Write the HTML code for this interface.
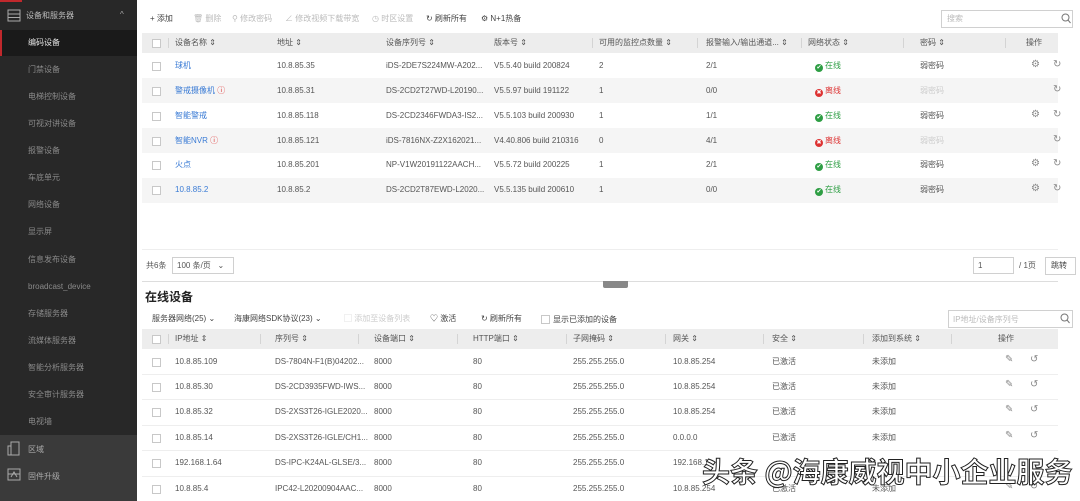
<!DOCTYPE html>
<html><head><meta charset="utf-8"><style>
*{margin:0;padding:0;box-sizing:border-box}
body{width:1080px;height:501px;overflow:hidden;background:#fff;font-family:"Liberation Sans","Noto Sans CJK SC",sans-serif;font-size:8px;line-height:10px;color:#555;position:relative}
.a{position:absolute;white-space:nowrap;line-height:10px}
#sb{position:absolute;left:0;top:0;width:137px;height:501px;background:#282828}
.si{position:absolute;left:28px;color:#8a8a8a;font-size:8px;line-height:10px}
.cb{position:absolute;width:9px;height:9px;border:1px solid #c8c8c8;background:#fff}
.hd{position:absolute;left:142px;width:916px;height:20px;background:#ededed}
.hdt{position:absolute;color:#555;font-size:8px;line-height:10px;white-space:nowrap}
.row{position:absolute;left:142px;width:916px}
.lnk{color:#3a7bd5}
.sep{position:absolute;width:1px;height:10px;background:#d4d4d4}
.dot{display:inline-block;width:8px;height:8px;border-radius:50%;color:#fff;font-size:6px;line-height:8px;text-align:center;vertical-align:-1px;margin-right:2px}
.wm{position:absolute;left:702px;top:453px;font-size:28px;line-height:36px;color:#fff;font-family:"Noto Sans CJK SC",sans-serif;-webkit-text-stroke:1px #222;font-weight:bold;white-space:nowrap}
</style></head><body>
<div id="sb">
<div style="position:absolute;left:0;top:0;width:22px;height:2px;background:#c0282c"></div>
<svg class="a" style="left:7px;top:9px" width="14" height="13"><rect x="1" y="1" width="12" height="11" fill="none" stroke="#aaa"/><line x1="1" y1="5" x2="13" y2="5" stroke="#aaa"/><line x1="1" y1="8.5" x2="13" y2="8.5" stroke="#aaa"/></svg>
<div class="a" style="left:26px;top:11px;color:#bbb">设备和服务器</div>
<div class="a" style="left:120px;top:10px;color:#aaa">^</div>
<div style="position:absolute;left:0;top:30px;width:137px;height:26px;background:#1a1a1a;border-left:2px solid #c0282c"></div>
<div class="a" style="left:28px;top:38px;color:#e6e6e6">编码设备</div>
<div class="si" style="top:65px">门禁设备</div>
<div class="si" style="top:92px">电梯控制设备</div>
<div class="si" style="top:119px">可视对讲设备</div>
<div class="si" style="top:146px">报警设备</div>
<div class="si" style="top:173px">车底单元</div>
<div class="si" style="top:200px">网络设备</div>
<div class="si" style="top:227px">显示屏</div>
<div class="si" style="top:255px">信息发布设备</div>
<div class="si" style="top:282px">broadcast_device</div>
<div class="si" style="top:309px">存储服务器</div>
<div class="si" style="top:336px">流媒体服务器</div>
<div class="si" style="top:363px">智能分析服务器</div>
<div class="si" style="top:390px">安全审计服务器</div>
<div class="si" style="top:417px">电视墙</div>
<div style="position:absolute;left:0;top:435px;width:137px;height:66px;background:#3a3a3a"></div>
<svg class="a" style="left:7px;top:441px" width="14" height="15"><rect x="4" y="1" width="8" height="13" fill="none" stroke="#aaa"/><rect x="1" y="5" width="3" height="9" fill="none" stroke="#aaa"/></svg>
<div class="a" style="left:28px;top:445px;color:#aaa">区域</div>
<svg class="a" style="left:7px;top:468px" width="14" height="13"><rect x="1" y="1" width="12" height="11" fill="none" stroke="#aaa"/><line x1="1" y1="6" x2="13" y2="6" stroke="#aaa"/><path d="M4 9 L7 4 L10 9" fill="none" stroke="#aaa"/></svg>
<div class="a" style="left:28px;top:472px;color:#aaa">固件升级</div>
</div>

<div class="a" style="left:150px;top:14px;color:#444">+ 添加</div>
<div class="a" style="left:193px;top:14px;color:#bbb">🗑 删除</div>
<div class="a" style="left:232px;top:14px;color:#bbb">⚲ 修改密码</div>
<div class="a" style="left:285px;top:14px;color:#bbb">∠ 修改视频下载带宽</div>
<div class="a" style="left:372px;top:14px;color:#bbb">◷ 时区设置</div>
<div class="a" style="left:426px;top:14px;color:#444">↻ 刷新所有</div>
<div class="a" style="left:481px;top:14px;color:#444">⚙ N+1热备</div>
<div style="position:absolute;left:941px;top:10px;width:132px;height:18px;border:1px solid #d0d0d0"></div>
<div class="a" style="left:947px;top:14px;color:#bbb">搜索</div>
<svg class="a" style="left:1061px;top:13px" width="10" height="11"><circle cx="4.5" cy="4.5" r="3.5" fill="none" stroke="#777"/><line x1="7" y1="7" x2="9.5" y2="10" stroke="#777"/></svg>

<div class="hd" style="top:33px"></div>
<div class="cb" style="left:152px;top:39px"></div>
<div class="sep" style="left:168px;top:38px"></div>
<div class="hdt" style="left:175px;top:38px">设备名称 ⇕</div>
<div class="hdt" style="left:277px;top:38px">地址 ⇕</div>
<div class="hdt" style="left:386px;top:38px">设备序列号 ⇕</div>
<div class="hdt" style="left:494px;top:38px">版本号 ⇕</div>
<div class="sep" style="left:592px;top:38px"></div><div class="hdt" style="left:599px;top:38px">可用的监控点数量 ⇕</div>
<div class="sep" style="left:697px;top:38px"></div><div class="hdt" style="left:706px;top:38px">报警输入/输出通道... ⇕</div>
<div class="sep" style="left:801px;top:38px"></div><div class="hdt" style="left:808px;top:38px">网络状态 ⇕</div>
<div class="sep" style="left:903px;top:38px"></div><div class="hdt" style="left:920px;top:38px">密码 ⇕</div>
<div class="sep" style="left:1005px;top:38px"></div><div class="hdt" style="left:1026px;top:38px">操作</div>

<div class="row" style="top:78px;height:25px;background:#f5f5f5"></div>
<div class="row" style="top:128px;height:25px;background:#f5f5f5"></div>
<div class="row" style="top:178px;height:25px;background:#f5f5f5"></div>

<div class="cb" style="left:152px;top:62px"></div><div class="a lnk" style="left:175px;top:61px">球机</div><div class="a" style="left:277px;top:61px">10.8.85.35</div><div class="a" style="left:386px;top:61px">iDS-2DE7S224MW-A202...</div><div class="a" style="left:494px;top:61px">V5.5.40 build 200824</div><div class="a" style="left:599px;top:61px">2</div><div class="a" style="left:706px;top:61px">2/1</div><div class="a" style="left:815px;top:61px;color:#2e9e44"><span class="dot" style="background:#2e9e44">✔</span>在线</div><div class="a" style="left:920px;top:61px">弱密码</div><div class="a" style="left:1031px;top:60px;color:#888;font-size:10px">⚙</div><div class="a" style="left:1053px;top:60px;color:#888;font-size:10px">↻</div>

<div class="cb" style="left:152px;top:87px"></div><div class="a lnk" style="left:175px;top:86px">警戒摄像机 <span style="color:#d33">ⓘ</span></div><div class="a" style="left:277px;top:86px">10.8.85.31</div><div class="a" style="left:386px;top:86px">DS-2CD2T27WD-L20190...</div><div class="a" style="left:494px;top:86px">V5.5.97 build 191122</div><div class="a" style="left:599px;top:86px">1</div><div class="a" style="left:706px;top:86px">0/0</div><div class="a" style="left:815px;top:86px;color:#d33"><span class="dot" style="background:#d33">✖</span>离线</div><div class="a" style="left:920px;top:86px;color:#ccc">弱密码</div><div class="a" style="left:1053px;top:85px;color:#888;font-size:10px">↻</div>

<div class="cb" style="left:152px;top:112px"></div><div class="a lnk" style="left:175px;top:111px">智能警戒</div><div class="a" style="left:277px;top:111px">10.8.85.118</div><div class="a" style="left:386px;top:111px">DS-2CD2346FWDA3-IS2...</div><div class="a" style="left:494px;top:111px">V5.5.103 build 200930</div><div class="a" style="left:599px;top:111px">1</div><div class="a" style="left:706px;top:111px">1/1</div><div class="a" style="left:815px;top:111px;color:#2e9e44"><span class="dot" style="background:#2e9e44">✔</span>在线</div><div class="a" style="left:920px;top:111px">弱密码</div><div class="a" style="left:1031px;top:110px;color:#888;font-size:10px">⚙</div><div class="a" style="left:1053px;top:110px;color:#888;font-size:10px">↻</div>

<div class="cb" style="left:152px;top:137px"></div><div class="a lnk" style="left:175px;top:136px">智能NVR <span style="color:#d33">ⓘ</span></div><div class="a" style="left:277px;top:136px">10.8.85.121</div><div class="a" style="left:386px;top:136px">iDS-7816NX-Z2X162021...</div><div class="a" style="left:494px;top:136px">V4.40.806 build 210316</div><div class="a" style="left:599px;top:136px">0</div><div class="a" style="left:706px;top:136px">4/1</div><div class="a" style="left:815px;top:136px;color:#d33"><span class="dot" style="background:#d33">✖</span>离线</div><div class="a" style="left:920px;top:136px;color:#ccc">弱密码</div><div class="a" style="left:1053px;top:135px;color:#888;font-size:10px">↻</div>

<div class="cb" style="left:152px;top:161px"></div><div class="a lnk" style="left:175px;top:160px">火点</div><div class="a" style="left:277px;top:160px">10.8.85.201</div><div class="a" style="left:386px;top:160px">NP-V1W20191122AACH...</div><div class="a" style="left:494px;top:160px">V5.5.72 build 200225</div><div class="a" style="left:599px;top:160px">1</div><div class="a" style="left:706px;top:160px">2/1</div><div class="a" style="left:815px;top:160px;color:#2e9e44"><span class="dot" style="background:#2e9e44">✔</span>在线</div><div class="a" style="left:920px;top:160px">弱密码</div><div class="a" style="left:1031px;top:159px;color:#888;font-size:10px">⚙</div><div class="a" style="left:1053px;top:159px;color:#888;font-size:10px">↻</div>

<div class="cb" style="left:152px;top:186px"></div><div class="a lnk" style="left:175px;top:185px">10.8.85.2</div><div class="a" style="left:277px;top:185px">10.8.85.2</div><div class="a" style="left:386px;top:185px">DS-2CD2T87EWD-L2020...</div><div class="a" style="left:494px;top:185px">V5.5.135 build 200610</div><div class="a" style="left:599px;top:185px">1</div><div class="a" style="left:706px;top:185px">0/0</div><div class="a" style="left:815px;top:185px;color:#2e9e44"><span class="dot" style="background:#2e9e44">✔</span>在线</div><div class="a" style="left:920px;top:185px">弱密码</div><div class="a" style="left:1031px;top:184px;color:#888;font-size:10px">⚙</div><div class="a" style="left:1053px;top:184px;color:#888;font-size:10px">↻</div>

<div class="row" style="top:249px;height:1px;background:#eee"></div>
<div class="a" style="left:146px;top:261px">共6条</div>
<div style="position:absolute;left:172px;top:257px;width:62px;height:17px;border:1px solid #d0d0d0"></div>
<div class="a" style="left:177px;top:261px">100 条/页 &nbsp;&nbsp;⌄</div>
<div style="position:absolute;left:973px;top:257px;width:41px;height:17px;border:1px solid #d0d0d0"></div>
<div class="a" style="left:978px;top:261px">1</div>
<div class="a" style="left:1019px;top:261px">/ 1页</div>
<div style="position:absolute;left:1045px;top:257px;width:31px;height:18px;border:1px solid #d0d0d0"></div>
<div class="a" style="left:1051px;top:261px;color:#444">跳转</div>
<div class="row" style="top:281px;height:1px;background:#ddd"></div>
<div style="position:absolute;left:603px;top:281px;width:25px;height:7px;background:#888;border-radius:0 0 2px 2px"></div>

<div class="a" style="left:145px;top:290px;font-size:12px;line-height:14px;font-weight:bold;color:#222">在线设备</div>
<div class="a" style="left:152px;top:314px;color:#444">服务器网络(25) ⌄</div>
<div class="a" style="left:234px;top:314px;color:#444">海康网络SDK协议(23) ⌄</div>
<div class="a" style="left:344px;top:314px;color:#ccc">▢ 添加至设备列表</div>
<div class="a" style="left:430px;top:314px;color:#444">♡ 激活</div>
<div class="a" style="left:481px;top:314px;color:#444">↻ 刷新所有</div>
<div class="cb" style="left:541px;top:315px"></div>
<div class="a" style="left:553px;top:315px;color:#444">显示已添加的设备</div>
<div style="position:absolute;left:948px;top:310px;width:125px;height:18px;border:1px solid #d0d0d0"></div>
<div class="a" style="left:953px;top:315px;color:#bbb">IP地址/设备序列号</div>
<svg class="a" style="left:1060px;top:313px" width="10" height="11"><circle cx="4.5" cy="4.5" r="3.5" fill="none" stroke="#777"/><line x1="7" y1="7" x2="9.5" y2="10" stroke="#777"/></svg>

<div class="hd" style="top:329px"></div>
<div class="cb" style="left:152px;top:335px"></div>
<div class="sep" style="left:168px;top:334px"></div><div class="hdt" style="left:175px;top:334px">IP地址 ⇕</div>
<div class="sep" style="left:260px;top:334px"></div><div class="hdt" style="left:275px;top:334px">序列号 ⇕</div>
<div class="sep" style="left:358px;top:334px"></div><div class="hdt" style="left:374px;top:334px">设备端口 ⇕</div>
<div class="sep" style="left:457px;top:334px"></div><div class="hdt" style="left:473px;top:334px">HTTP端口 ⇕</div>
<div class="sep" style="left:566px;top:334px"></div><div class="hdt" style="left:573px;top:334px">子网掩码 ⇕</div>
<div class="sep" style="left:665px;top:334px"></div><div class="hdt" style="left:673px;top:334px">网关 ⇕</div>
<div class="sep" style="left:763px;top:334px"></div><div class="hdt" style="left:772px;top:334px">安全 ⇕</div>
<div class="sep" style="left:863px;top:334px"></div><div class="hdt" style="left:872px;top:334px">添加到系统 ⇕</div>
<div class="sep" style="left:951px;top:334px"></div><div class="hdt" style="left:998px;top:334px">操作</div>

<div class="row" style="top:374px;height:1px;background:#eee"></div>
<div class="row" style="top:399px;height:1px;background:#eee"></div>
<div class="row" style="top:425px;height:1px;background:#eee"></div>
<div class="row" style="top:450px;height:1px;background:#eee"></div>
<div class="row" style="top:476px;height:1px;background:#eee"></div>

<div class="cb" style="left:152px;top:358px"></div><div class="a" style="left:175px;top:357px">10.8.85.109</div><div class="a" style="left:275px;top:357px">DS-7804N-F1(B)04202...</div><div class="a" style="left:374px;top:357px">8000</div><div class="a" style="left:473px;top:357px">80</div><div class="a" style="left:573px;top:357px">255.255.255.0</div><div class="a" style="left:673px;top:357px">10.8.85.254</div><div class="a" style="left:772px;top:357px">已激活</div><div class="a" style="left:872px;top:357px">未添加</div><div class="a" style="left:1005px;top:355px;color:#888;font-size:10px">✎</div><div class="a" style="left:1030px;top:355px;color:#888;font-size:10px">↺</div>

<div class="cb" style="left:152px;top:383px"></div><div class="a" style="left:175px;top:382px">10.8.85.30</div><div class="a" style="left:275px;top:382px">DS-2CD3935FWD-IWS...</div><div class="a" style="left:374px;top:382px">8000</div><div class="a" style="left:473px;top:382px">80</div><div class="a" style="left:573px;top:382px">255.255.255.0</div><div class="a" style="left:673px;top:382px">10.8.85.254</div><div class="a" style="left:772px;top:382px">已激活</div><div class="a" style="left:872px;top:382px">未添加</div><div class="a" style="left:1005px;top:380px;color:#888;font-size:10px">✎</div><div class="a" style="left:1030px;top:380px;color:#888;font-size:10px">↺</div>

<div class="cb" style="left:152px;top:408px"></div><div class="a" style="left:175px;top:407px">10.8.85.32</div><div class="a" style="left:275px;top:407px">DS-2XS3T26-IGLE2020...</div><div class="a" style="left:374px;top:407px">8000</div><div class="a" style="left:473px;top:407px">80</div><div class="a" style="left:573px;top:407px">255.255.255.0</div><div class="a" style="left:673px;top:407px">10.8.85.254</div><div class="a" style="left:772px;top:407px">已激活</div><div class="a" style="left:872px;top:407px">未添加</div><div class="a" style="left:1005px;top:405px;color:#888;font-size:10px">✎</div><div class="a" style="left:1030px;top:405px;color:#888;font-size:10px">↺</div>

<div class="cb" style="left:152px;top:434px"></div><div class="a" style="left:175px;top:433px">10.8.85.14</div><div class="a" style="left:275px;top:433px">DS-2XS3T26-IGLE/CH1...</div><div class="a" style="left:374px;top:433px">8000</div><div class="a" style="left:473px;top:433px">80</div><div class="a" style="left:573px;top:433px">255.255.255.0</div><div class="a" style="left:673px;top:433px">0.0.0.0</div><div class="a" style="left:772px;top:433px">已激活</div><div class="a" style="left:872px;top:433px">未添加</div><div class="a" style="left:1005px;top:431px;color:#888;font-size:10px">✎</div><div class="a" style="left:1030px;top:431px;color:#888;font-size:10px">↺</div>

<div class="cb" style="left:152px;top:459px"></div><div class="a" style="left:175px;top:458px">192.168.1.64</div><div class="a" style="left:275px;top:458px">DS-IPC-K24AL-GLSE/3...</div><div class="a" style="left:374px;top:458px">8000</div><div class="a" style="left:473px;top:458px">80</div><div class="a" style="left:573px;top:458px">255.255.255.0</div><div class="a" style="left:673px;top:458px">192.168.1</div>

<div class="cb" style="left:152px;top:485px"></div><div class="a" style="left:175px;top:484px">10.8.85.4</div><div class="a" style="left:275px;top:484px">IPC42-L20200904AAC...</div><div class="a" style="left:374px;top:484px">8000</div><div class="a" style="left:473px;top:484px">80</div><div class="a" style="left:573px;top:484px">255.255.255.0</div><div class="a" style="left:673px;top:484px">10.8.85.254</div><div class="a" style="left:772px;top:484px">已激活</div><div class="a" style="left:872px;top:484px">未添加</div><div class="a" style="left:1005px;top:482px;color:#888;font-size:10px">✎</div><div class="a" style="left:1030px;top:482px;color:#888;font-size:10px">↺</div>

<div class="wm">头条 @海康威视中小企业服务</div>
</body></html>
